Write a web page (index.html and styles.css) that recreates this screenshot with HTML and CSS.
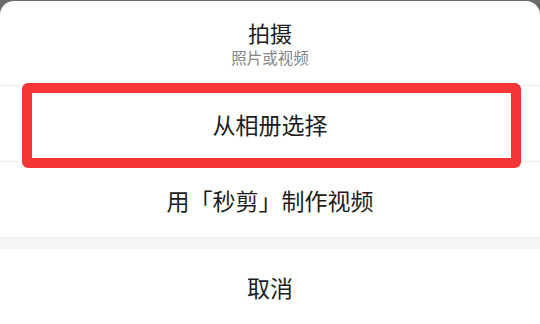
FILE: index.html
```html
<!DOCTYPE html>
<html lang="zh-CN">
<head>
    <meta charset="UTF-8">
    <meta name="viewport" content="width=device-width, initial-scale=1.0">
    <title>拍摄</title>
    <link rel="stylesheet" href="styles.css">
</head>
<body>
    <div class="sheet">
        <div class="sheet-header">
            <div class="sheet-title">拍摄</div>
            <div class="sheet-subtitle">照片或视频</div>
        </div>
        <div class="sheet-option">从相册选择</div>
        <div class="sheet-option">用「秒剪」制作视频</div>
        <div class="sheet-gap"></div>
        <div class="sheet-option cancel">取消</div>

        <!-- highlight marker drawn over the album option -->
        <div class="highlight"></div>
    </div>
</body>
</html>
```

FILE: styles.css
```css
body {
    margin: 0;
    padding-top: 1px;
    background-color: #6b6b6b;
    font-family: "Noto Sans CJK SC", "Noto Sans", sans-serif;
    overflow: hidden;
}
.sheet {
    position: relative;
    height: 323px;
    background-color: #fff;
    border-radius: 14px 14px 0 0;
    color: #1c1c1c;
}
.sheet-header {
    height: 84px;
    display: flex;
    flex-direction: column;
    align-items: center;
    justify-content: center;
    box-sizing: border-box;
    padding-top: 1px;
}
.sheet-title {
    font-size: 22px;
    line-height: 26px;
}
.sheet-subtitle {
    font-size: 15.5px;
    line-height: 24px;
    color: #858585;
}
.sheet-option {
    height: 75px;
    display: flex;
    align-items: center;
    justify-content: center;
    font-size: 23px;
    border-top: 1px solid #ededed;
}
.sheet-option.cancel {
    height: 76px;
    border-top: none;
}
.sheet-gap {
    height: 11px;
    background-color: #f5f5f5;
    border-top: 1px solid #ececec;
}
.highlight {
    position: absolute;
    left: 22px;
    top: 82px;
    width: 499px;
    height: 85px;
    box-sizing: border-box;
    border: 10px solid #f43535;
    border-radius: 6px;
}
```
